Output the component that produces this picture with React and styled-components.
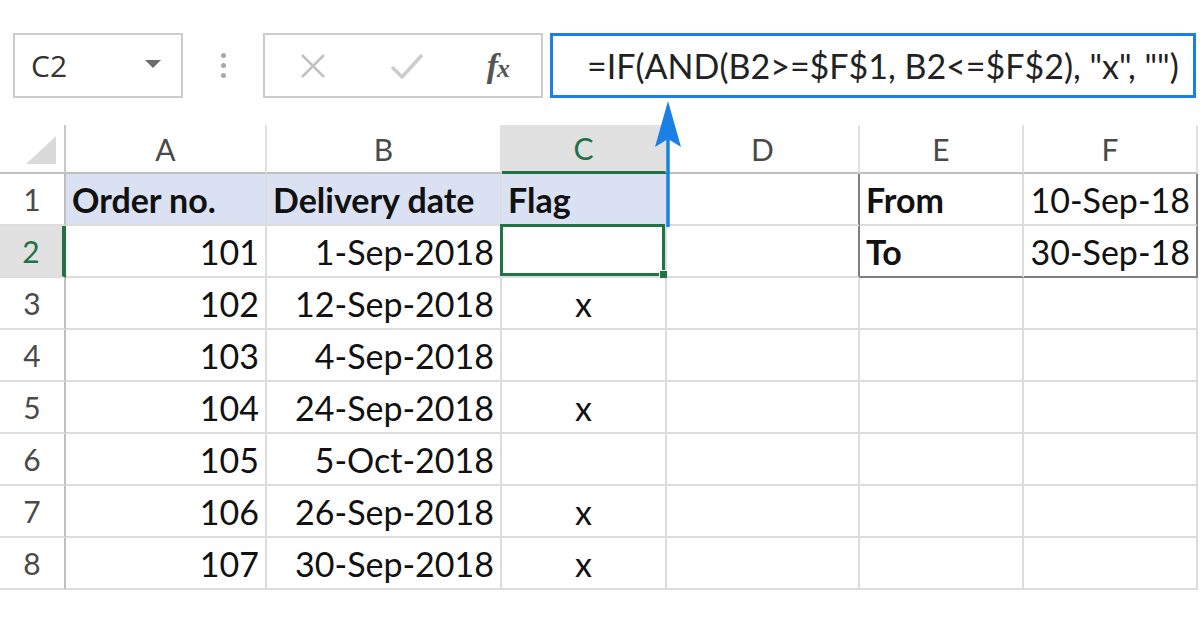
import React from 'react'
import styled, { createGlobalStyle } from 'styled-components'

const GlobalStyle = createGlobalStyle`
  body {
    margin: 0;
    background: #ffffff;
    font-family: Lato, "Open Sans", sans-serif;
  }
`

const columns = [
    { key: 'A', width: 201 },
    { key: 'B', width: 235 },
    { key: 'C', width: 165 },
    { key: 'D', width: 193 },
    { key: 'E', width: 164 },
    { key: 'F', width: 174 },
]

const rows = [
    ['101', '1-Sep-2018', ''],
    ['102', '12-Sep-2018', 'x'],
    ['103', '4-Sep-2018', ''],
    ['104', '24-Sep-2018', 'x'],
    ['105', '5-Oct-2018', ''],
    ['106', '26-Sep-2018', 'x'],
    ['107', '30-Sep-2018', 'x'],
]

const App = () => {
    return (
        <Page>
            <GlobalStyle />
            <FormulaBar>
                <NameBox>
                    <span>C2</span>
                    <DropArrow />
                </NameBox>
                <Dots>
                    <i /><i /><i />
                </Dots>
                <ButtonBox>
                    <svg width="28" height="28" viewBox="0 0 28 28">
                        <path d="M3 3 L25 25 M25 3 L3 25" stroke="#c2c2c2" strokeWidth="2.5" fill="none" />
                    </svg>
                    <svg width="34" height="30" viewBox="0 0 34 30">
                        <path d="M2 16 L12 26 L32 4" stroke="#cdcdcd" strokeWidth="3.5" fill="none" strokeLinejoin="round" />
                    </svg>
                    <Fx>f<small>x</small></Fx>
                </ButtonBox>
                <FormulaInput>=IF(AND(B2&gt;=$F$1, B2&lt;=$F$2), "x", "")</FormulaInput>
            </FormulaBar>

            <Sheet>
                <Corner />
                {columns.map(c => (
                    <ColHead key={c.key} $selected={c.key === 'C'}>{c.key}</ColHead>
                ))}

                <RowHead>1</RowHead>
                <Cell $bold $fill>Order no.</Cell>
                <Cell $bold $fill>Delivery date</Cell>
                <Cell $bold $fill>Flag</Cell>
                <Cell $darkRight />
                <Cell $bold>From</Cell>
                <Cell $right $darkRight>10-Sep-18</Cell>

                {rows.map((r, i) => {
                    const n = i + 2
                    return (
                        <React.Fragment key={n}>
                            <RowHead $selected={n === 2}>{n}</RowHead>
                            <Cell $right>{r[0]}</Cell>
                            <Cell $right>{r[1]}</Cell>
                            <Cell $center $active={n === 2}>
                                {r[2]}
                                {n === 2 && <FillHandle />}
                            </Cell>
                            <Cell $darkRight={n === 2} />
                            {n === 2 ? (
                                <>
                                    <Cell $bold $darkBottom>To</Cell>
                                    <Cell $right $darkRight $darkBottom>30-Sep-18</Cell>
                                </>
                            ) : (
                                <>
                                    <Cell />
                                    <Cell />
                                </>
                            )}
                        </React.Fragment>
                    )
                })}
            </Sheet>

            <Arrow width="30" height="128" viewBox="0 0 30 128">
                <path d="M15 126 L15 30" stroke="#1a80e6" strokeWidth="3.5" fill="none" />
                <path d="M15 0 L28 46 L15 38 L2 46 Z" fill="#1a80e6" />
            </Arrow>
        </Page>
    )
}

export default App

const Page = styled.div`
    position:relative;
    width:1200px;
    height:620px;
    padding-top:33px;
    box-sizing:border-box;
    overflow:hidden;
    background:#fff;
`

const FormulaBar = styled.div`
    display:flex;
    align-items:stretch;
    height:65px;
    padding-left:13px;
`

const NameBox = styled.div`
    width:170px;
    box-sizing:border-box;
    border:2px solid #cccccc;
    display:flex;
    align-items:center;
    justify-content:space-between;
    padding:0 20px 0 16px;
    font-family:"Open Sans", sans-serif;
    font-size:30px;
    color:#333;
`

const DropArrow = styled.div`
    width:0;
    height:0;
    border-left:8px solid transparent;
    border-right:8px solid transparent;
    border-top:8px solid #6b6b6b;
    margin-top:-4px;
`

const Dots = styled.div`
    width:80px;
    display:flex;
    flex-direction:column;
    align-items:center;
    justify-content:center;
    gap:5px;
    i{
        display:block;
        width:5px;
        height:5px;
        border-radius:50%;
        background:#a8a8a8;
    }
`

const ButtonBox = styled.div`
    width:280px;
    box-sizing:border-box;
    border:2px solid #cccccc;
    display:flex;
    align-items:center;
    justify-content:space-between;
    padding:0 32px 0 34px;
`

const Fx = styled.span`
    font-family:"Liberation Serif", serif;
    font-style:italic;
    font-weight:700;
    font-size:34px;
    color:#555;
    letter-spacing:-1px;
    small{
        font-size:26px;
    }
`

const FormulaInput = styled.div`
    margin-left:7px;
    width:646px;
    box-sizing:border-box;
    border:3px solid #1a80e6;
    display:flex;
    align-items:center;
    padding-left:34px;
    font-family:Lato, sans-serif;
    font-size:34px;
    color:#222;
    white-space:nowrap;
`

const Sheet = styled.div`
    margin-top:27px;
    display:grid;
    grid-template-columns:66px ${columns.map(c => c.width + 'px').join(' ')};
    grid-template-rows:49px repeat(8, 52px);
    font-family:Lato, sans-serif;
`

const Corner = styled.div`
    position:relative;
    border-right:2px solid #c8c8c8;
    border-bottom:2px solid #c0c0c0;
    &::after{
        content:'';
        position:absolute;
        right:8px;
        bottom:8px;
        width:0;
        height:0;
        border-left:30px solid transparent;
        border-bottom:28px solid #dadada;
    }
`

const ColHead = styled.div`
    display:flex;
    align-items:center;
    justify-content:center;
    font-size:30px;
    color:${p => p.$selected ? '#217346' : '#4a4a4a'};
    background:${p => p.$selected ? '#e1e1e1' : '#fff'};
    border-right:2px solid #e0e0e0;
    border-bottom:${p => p.$selected ? '3px solid #217346' : '2px solid #bfbfbf'};
`

const RowHead = styled.div`
    display:flex;
    align-items:center;
    justify-content:center;
    font-size:30px;
    color:${p => p.$selected ? '#217346' : '#4a4a4a'};
    background:${p => p.$selected ? '#e1e1e1' : '#fff'};
    border-right:${p => p.$selected ? '4px solid #217346' : '2px solid #bfbfbf'};
    border-bottom:2px solid #dedede;
`

const Cell = styled.div`
    position:relative;
    display:flex;
    align-items:center;
    justify-content:${p => p.$right ? 'flex-end' : p.$center ? 'center' : 'flex-start'};
    padding:0 ${p => p.$right ? '6px' : '6px'};
    font-size:34px;
    font-weight:${p => p.$bold ? 700 : 400};
    color:#111;
    background:${p => p.$fill ? '#d9e1f2' : '#fff'};
    white-space:nowrap;
    border-right:2px solid ${p => p.$darkRight ? '#7f7f7f' : '#dcdcdc'};
    border-bottom:2px solid ${p => p.$darkBottom ? '#7f7f7f' : '#dcdcdc'};
    ${p => p.$active && `
        box-shadow:inset 0 0 0 3px #217346;
        margin:-2px 0 0 -2px;
    `}
`

const FillHandle = styled.div`
    position:absolute;
    right:-6px;
    bottom:-6px;
    width:10px;
    height:10px;
    background:#217346;
    border:1px solid #fff;
`

const Arrow = styled.svg`
    position:absolute;
    left:653px;
    top:101px;
`
